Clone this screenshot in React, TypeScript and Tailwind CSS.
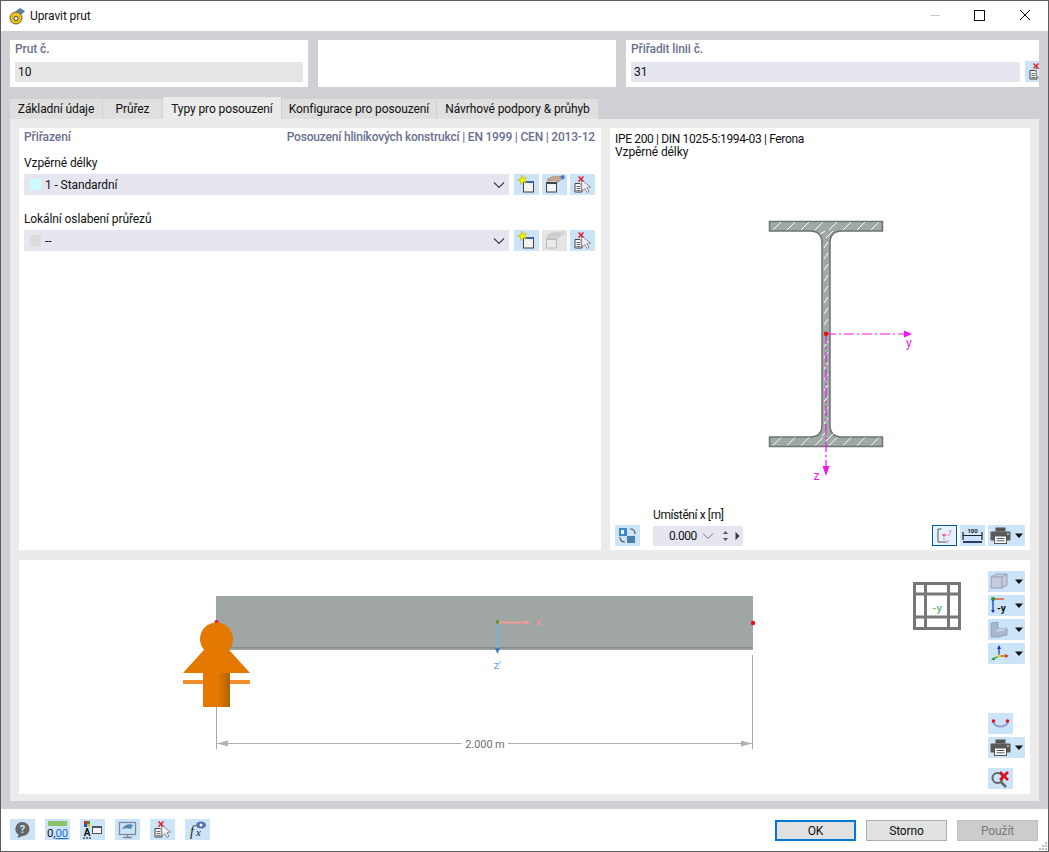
import type { ReactNode } from 'react';

const font = { fontFamily: 'Roboto, "Noto Sans", sans-serif' };

function Caret() {
  return (
    <svg width="12" height="21" viewBox="0 0 12 21" className="shrink-0">
      <path d="M2 8.500h8l-4 4.500z" fill="#111" />
    </svg>
  );
}

function IconBtn({ children, caret, disabled }: { children: ReactNode; caret?: boolean; disabled?: boolean }) {
  return (
    <div className={`flex h-[21px] shrink-0 ${caret ? 'w-[37px]' : 'w-[25px]'} ${disabled ? 'bg-[#e5e5e5]' : 'bg-[#cce4f7]'}`}>
      <svg width="25" height="21" viewBox="0 0 25 21" className="shrink-0">{children}</svg>
      {caret && <Caret />}
    </div>
  );
}

function NewIco() {
  return (
    <>
      <rect x="9.500" y="7.500" width="10" height="10.500" fill="#f3f3f3" stroke="#444" />
      <rect x="9" y="7" width="11" height="2" fill="#3b5ea8" />
      <path d="M8 1l1.400 3 3.300-.6-2 2.600 1.700 3-3.400-1-2.300 2.500-.2-3.300L3.300 6l3.300-1z" fill="#f5f000" stroke="#a8a400" strokeWidth=".5" />
    </>
  );
}

function EditIco({ off }: { off?: boolean }) {
  return (
    <g opacity={off ? 0.4 : 1}>
      <rect x="4.500" y="8.500" width="10" height="9.500" fill="#f3f3f3" stroke={off ? '#777' : '#444'} />
      <rect x="4" y="8" width="11" height="2" fill={off ? '#888' : '#444'} />
      <path d="M5 6c1-2 4-3 7-3.500 2-.5 4-.5 6 0l1 3-3 2.500-3-1.500-4 .5-3 .5z" fill={off ? '#aaa' : '#c9a58c'} stroke={off ? '#999' : '#9a7a66'} strokeWidth=".5" />
      <path d="M18 2l4-1 1 3-3 2z" fill={off ? '#bbb' : '#4a7fc0'} />
    </g>
  );
}

function PickIco() {
  return (
    <>
      <path d="M5 9.500h5l2 2v6.500H5z" fill="#f5f5f5" stroke="#444" />
      <path d="M6.500 12.500h4M6.500 14.500h4M6.500 16.500h4" stroke="#444" strokeWidth=".8" />
      <path d="M11.500 6l9 7-3.500.5 2 4-2 1-2-4-3 2.500z" fill="#f5f5f5" stroke="#777" strokeWidth=".8" />
      <path d="M8.500 2.500l5 5M13.500 2.500l-5 5" stroke="#e0202a" strokeWidth="1.500" />
    </>
  );
}

function PrintIco() {
  return (
    <>
      <rect x="7.500" y="2.500" width="10" height="4" fill="#555" />
      <rect x="2.500" y="6.500" width="20" height="9" rx="1" fill="#5a5a5a" />
      <rect x="6.500" y="11" width="12" height="7.500" fill="#fff" stroke="#555" />
      <path d="M8.500 13.500h8M8.500 15.800h8" stroke="#555" />
      <rect x="19" y="8.500" width="2" height="1" fill="#fff" />
    </>
  );
}

function Select({ swatch, label }: { swatch: string; label: string }) {
  return (
    <div className="flex h-[21px] w-[485px] items-center bg-[#e6e6f0] pl-[6px] pr-[3px]">
      <div className={`h-[11px] w-[11px] ${swatch}`} />
      <span className="ml-[4px] flex-1 pt-px">{label}</span>
      <svg width="14" height="10" viewBox="0 0 14 10">
        <path d="M2 2.500l5 5 5-5" fill="none" stroke="#444" strokeWidth="1.200" />
      </svg>
    </div>
  );
}

function Tab({ label, w, active }: { label: string; w: string; active?: boolean }) {
  return (
    <div className={`flex items-center justify-center ${w} ${active ? 'h-[22px] bg-[#ebebeb] pt-[2px]' : 'h-[20px] bg-[#dfdfdf] pt-px'}`}>
      {label}
    </div>
  );
}

function SectionDrawing() {
  const flangeX = [776, 790, 804, 818, 832, 846, 860, 874];
  const webY = [245, 256, 267, 278, 289, 300, 311, 322, 344, 355, 366, 377, 388, 399, 410, 421];
  return (
    <svg width="420" height="345" viewBox="610 160 420 345" className="block shrink-0">
      <path
        d="M769.500 221.500H882.500V231H842Q830 231 830 243V425Q830 437 842 437H882.500V446.500H769.500V437H810Q822 437 822 425V243Q822 231 810 231H769.500Z"
        fill="#9fa9a6"
        stroke="#6d7371"
        strokeWidth="1.500"
      />
      <g stroke="#fff" strokeWidth="1">
        {flangeX.map((x) => (
          <g key={x}>
            <path d={`M${x - 3} 230l8-8`} />
            <path d={`M${x - 3} 445.500l8-8`} />
          </g>
        ))}
        <path d="M826 238l7-7M820 234l5-3M822 436l5-5M826 441l8-8" />
        {webY.map((y) => (
          <path key={y} d={`M824 ${y + 3}l4-6`} />
        ))}
      </g>
      <g stroke="#f014f0" strokeWidth="1.200" strokeDasharray="10 3 2 3" fill="none">
        <path d="M826 334H904" />
        <path d="M826 334V468" />
      </g>
      <path d="M904 330.500l8 3.500-8 3.500z" fill="#f014f0" />
      <path d="M822.500 466l3.500 10 3.500-10z" fill="#f014f0" />
      <circle cx="826" cy="333.700" r="2.300" fill="#f01010" />
      <text x="906" y="347" fontSize="12" fill="#f014f0">y</text>
      <text x="813.500" y="480" fontSize="12" fill="#f014f0">z</text>
    </svg>
  );
}

function BeamDrawing() {
  return (
    <svg width="969" height="234" viewBox="19 560 969 234" className="block shrink-0">
      <defs>
        <linearGradient id="post" x1="0" x2="1" y1="0" y2="0">
          <stop offset="0" stopColor="#e57800" />
          <stop offset=".55" stopColor="#e57800" />
          <stop offset="1" stopColor="#b06000" />
        </linearGradient>
      </defs>
      <rect x="216" y="596" width="537" height="54" fill="#9fa6a3" />
      <rect x="216" y="647" width="537" height="1.500" fill="#858c8a" />
      <circle cx="216.500" cy="622" r="2" fill="#f01030" />
      <circle cx="753" cy="623" r="2.200" fill="#f01010" />

      <path d="M497.500 622.500H527" stroke="#f29b9b" strokeWidth="2" />
      <path d="M525 620l5.500 2.500-5.500 2.500z" fill="#f29b9b" />
      <path d="M497.500 622V650" stroke="#6db5ea" strokeWidth="2" />
      <path d="M495 648h5l-2.500 6z" fill="#3a78b8" />
      <rect x="496" y="620.500" width="3" height="3" fill="#5a9a20" />
      <text x="535.500" y="626" fontSize="11.500" fill="#f29b9b">x'</text>
      <text x="493.500" y="668.500" fontSize="11.500" fill="#5aa9f0">z'</text>

      <path d="M216.500 707V749M752.500 655V749" stroke="#a9a9a9" />
      <path d="M217 743.500H462M508 743.500H752" stroke="#b0b0b0" />
      <path d="M217 743.500l11-3v6zM752 743.500l-11-3v6z" fill="#b0b0b0" />
      <text x="485" y="748" fontSize="11" textAnchor="middle" fill="#6f6f6f">2.000 m</text>

      <circle cx="216.500" cy="639" r="16.500" fill="#e57800" />
      <path d="M216.500 636L250 673H183z" fill="#e57800" />
      <rect x="183" y="680" width="67" height="4" fill="#ef8e2a" />
      <rect x="203" y="673" width="27" height="34" fill="url(#post)" />

      <g stroke="#777" strokeWidth="3" fill="none">
        <rect x="914.500" y="583.500" width="45" height="45" />
        <path d="M925.500 583V629M948.500 583V629M914 594H960M914 617H960" />
      </g>
      <text x="937" y="612" fontSize="11" fontWeight="700" textAnchor="middle" fill="#7fbf8f">-y</text>
    </svg>
  );
}

export default function App() {
  return (
    <div style={font} className="flex h-[852px] w-[1049px] flex-col overflow-hidden border border-[#5c5c5c] bg-white text-[12px] leading-[13px] tracking-[-0.1px] text-[#111]">
      {/* title bar */}
      <div className="flex h-[30px] shrink-0 items-center pl-[8px]">
        <svg width="18" height="18" viewBox="0 0 18 18">
          <path d="M3 7l8-6 5 3-6 6z" fill="#5a7fa8" />
          <circle cx="7" cy="11" r="6" fill="#e8c020" stroke="#7a6a20" />
          <circle cx="7" cy="11.500" r="2" fill="#fff" stroke="#444" />
        </svg>
        <span className="ml-[3px] flex-1">Upravit prut</span>
        <svg width="118" height="30" viewBox="0 0 118 30">
          <path d="M0 14.500H10" stroke="#c8c8c8" />
          <rect x="44.500" y="9.500" width="10" height="10" fill="none" stroke="#111" />
          <path d="M90 9l10 10M100 9l-10 10" stroke="#111" />
        </svg>
      </div>

      {/* body */}
      <div className="flex h-[778px] shrink-0 flex-col bg-[#d0cfd4] pl-[9px] pt-[9px]">
        <div className="flex h-[47px] gap-[10px]">
          <div className="w-[298px] bg-white px-[5px] pt-[3px]">
            <div className="h-[19px] font-medium leading-[13px] text-[#6a6f8e]">Prut č.</div>
            <div className="flex h-[20px] items-center bg-[#e5e5e5] pl-[3px] pt-px">10</div>
          </div>
          <div className="w-[298px] bg-white" />
          <div className="w-[413px] overflow-hidden bg-white pl-[5px] pt-[3px]">
            <div className="h-[19px] font-medium text-[#6a6f8e]">Přiřadit linii č.</div>
            <div className="flex gap-[5px]">
              <div className="flex h-[20px] w-[389px] shrink-0 items-center bg-[#e6e6f0] pl-[3px] pt-px">31</div>
              <div className="-mt-px"><IconBtn><PickIco /></IconBtn></div>
            </div>
          </div>
        </div>

        <div className="mt-[10px] flex h-[22px] items-end gap-px">
          <Tab label="Základní údaje" w="w-[92px]" />
          <Tab label="Průřez" w="w-[59px]" />
          <Tab label="Typy pro posouzení" w="w-[118px]" active />
          <Tab label="Konfigurace pro posouzení" w="w-[154px]" />
          <Tab label="Návrhové podpory & průhyb" w="w-[161px]" />
        </div>

        <div className="flex h-[682px] w-[1029px] flex-col gap-[10px] bg-[#ebebeb] px-[9px] pb-[7px] pt-[9px]">
          <div className="flex h-[422px] gap-[9px]">
            {/* left panel */}
            <div className="w-[582px] bg-white pl-[5px] pr-[6px] pt-[3px]">
              <div className="flex h-[13px] justify-between font-medium text-[#6a6f8e]">
                <span>Přiřazení</span>
                <span className="tracking-[-0.19px]">Posouzení hliníkových konstrukcí | EN 1999 | CEN | 2013-12</span>
              </div>
              <div className="mt-[13px]">Vzpěrné délky</div>
              <div className="mt-[4px] flex gap-[3px]">
                <div className="mr-[2px]"><Select swatch="bg-[#ccfcff]" label="1 - Standardní" /></div>
                <IconBtn><NewIco /></IconBtn>
                <IconBtn><EditIco /></IconBtn>
                <IconBtn><PickIco /></IconBtn>
              </div>
              <div className="mt-[18px]">Lokální oslabení průřezů</div>
              <div className="mt-[4px] flex gap-[3px]">
                <div className="mr-[2px]"><Select swatch="bg-[#dcdcdc]" label="--" /></div>
                <IconBtn><NewIco /></IconBtn>
                <IconBtn disabled><EditIco off /></IconBtn>
                <IconBtn><PickIco /></IconBtn>
              </div>
            </div>

            {/* right panel */}
            <div className="flex w-[420px] flex-col bg-white pb-[4px] pt-[5px]">
              <div className="mb-px pl-[5px]">
                <div className="tracking-[-0.35px]">IPE 200 | DIN 1025-5:1994-03 | Ferona</div>
                <div>Vzpěrné délky</div>
              </div>
              <SectionDrawing />
              <div className="mt-auto flex items-end pl-[5px] pr-[5px]">
                <IconBtn>
                  <rect x="4" y="3" width="8" height="8" fill="#3f86d0" />
                  <rect x="6" y="5" width="3" height="4" fill="#dff" />
                  <rect x="12" y="11" width="8" height="7" fill="#4a7fae" />
                  <path d="M15 4c3 0 5 2 5 5M10 17c-3 0-5-2-5-5" fill="none" stroke="#555" strokeWidth="1.200" />
                </IconBtn>
                <div className="ml-[13px] flex flex-col gap-[4px]">
                  <span className="h-[13px] tracking-[-0.4px]">Umístění x [m]</span>
                  <div className="flex h-[20px] w-[90px] items-center bg-[#e6e6f0] pl-[16px]">
                    <span className="w-[29px] tracking-[-0.5px]">0.000</span>
                    <svg width="45" height="20" viewBox="0 0 45 20">
                      <path d="M5 7.500l5 5 5-5" fill="none" stroke="#777" />
                      <path d="M25 8l2.500-3 2.500 3zM25 12l2.500 3 2.500-3z" fill="#555" />
                      <path d="M37.500 6v8l4-4z" fill="#333" />
                    </svg>
                  </div>
                </div>
                <div className="flex-1" />
                <div className="flex gap-[3px]">
                  <div className="h-[21px] w-[25px] border border-[#005a9e] bg-[#e5f1fb]">
                    <svg width="23" height="19" viewBox="0 0 23 19">
                      <path d="M8.500 3H5v13h8" fill="none" stroke="#555" />
                      <path d="M9 9h8M11 9v6" stroke="#e060a8" strokeDasharray="2 1" />
                      <circle cx="11" cy="9" r="1.200" fill="#e060a8" />
                      <text x="16" y="7" fontSize="6" fill="#e060a8">y</text>
                      <text x="13" y="17" fontSize="6" fill="#e060a8">z</text>
                    </svg>
                  </div>
                  <IconBtn>
                    <path d="M3 7v8M22 7v8M3 10.500h19" stroke="#222" strokeWidth="1.200" fill="none" />
                    <rect x="3" y="16" width="19" height="2" fill="#2a3a6a" />
                    <text x="12.500" y="8" fontSize="6" fontWeight="700" textAnchor="middle" fill="#222">100</text>
                  </IconBtn>
                  <IconBtn caret><PrintIco /></IconBtn>
                </div>
              </div>
            </div>
          </div>

          {/* lower panel */}
          <div className="flex h-[234px] w-[1011px] bg-white">
            <BeamDrawing />
            <div className="flex flex-col gap-[3px] pt-[11px]">
              <IconBtn caret>
                <path d="M3 6l5-3h11v11l-5 3H3z" fill="#c3cbdc" stroke="#8a93a8" strokeWidth=".8" />
                <path d="M3 6h11v11M14 6l5-3" fill="none" stroke="#8a93a8" strokeWidth=".8" />
              </IconBtn>
              <IconBtn caret>
                <circle cx="5" cy="4" r="2" fill="#1a9a3a" />
                <path d="M6 4h10" stroke="#d04010" strokeWidth="1.200" />
                <path d="M5 5v11" stroke="#1030c0" strokeWidth="1.200" />
                <path d="M3 15l2 3 2-3z" fill="#1030c0" />
                <text x="9" y="17" fontSize="10" fontWeight="700" fill="#111">-y</text>
              </IconBtn>
              <IconBtn caret>
                <path d="M3 4l7-1v7l9-1v7l-9 2H3z" fill="#a8b8d0" stroke="#8a9ab0" strokeWidth=".8" />
                <path d="M10 10l9-1-4 3-8 1z" fill="#c8d4e4" />
              </IconBtn>
              <IconBtn caret>
                <path d="M11 13V5" stroke="#1030c0" strokeWidth="1.200" />
                <path d="M9 6l2-4 2 4z" fill="#1030c0" />
                <path d="M11 13h7" stroke="#d04010" strokeWidth="1.200" />
                <path d="M17 11l4 2-4 2z" fill="#d04010" />
                <path d="M11 13l-6 3" stroke="#1a9a3a" strokeWidth="1.200" />
                <path d="M3 17l3-3 1 3z" fill="#1a9a3a" />
                <circle cx="11" cy="13" r="1.800" fill="#f0d020" />
              </IconBtn>
              <div className="h-[43px]" />
              <IconBtn>
                <path d="M5 9c3 6 12 6 15 0" fill="none" stroke="#8aa0c8" strokeWidth="2" />
                <circle cx="5.500" cy="8" r="1.800" fill="#e01020" />
                <circle cx="19.500" cy="8" r="1.800" fill="#e01020" />
              </IconBtn>
              <IconBtn caret><PrintIco /></IconBtn>
              <div className="mt-[7px]">
                <IconBtn>
                  <circle cx="9.500" cy="10" r="5" fill="none" stroke="#666" strokeWidth="2" />
                  <path d="M13 14l5 5" stroke="#666" strokeWidth="2.500" />
                  <path d="M12 4l8 8M20 4l-8 8" stroke="#e01020" strokeWidth="2.500" />
                </IconBtn>
              </div>
            </div>
          </div>
        </div>
      </div>

      {/* footer */}
      <div className="relative flex h-[42px] shrink-0 items-start pl-[9px] pt-[10px]">
        <div className="flex gap-[10px]">
          <IconBtn>
            <path d="M12.500 3a7 7 0 0 1 0 14l-5 2 1-3.200a7 7 0 0 1 4-12.800z" fill="#666" />
            <text x="12.500" y="14" fontSize="11" fontWeight="700" textAnchor="middle" fill="#cce4f7">?</text>
          </IconBtn>
          <IconBtn>
            <rect x="3" y="2" width="19" height="5" fill="#8fc06a" />
            <text x="2" y="18" fontSize="11.500" fill="#111">0,</text>
            <text x="10.500" y="18" fontSize="11.500" fill="#2a70d0" textDecoration="underline">00</text>
          </IconBtn>
          <IconBtn>
            <rect x="4" y="2" width="3" height="3" fill="#e02020" />
            <rect x="7" y="2" width="3" height="3" fill="#30a030" />
            <rect x="4" y="5" width="3" height="3" fill="#2050d0" />
            <rect x="7" y="5" width="3" height="3" fill="#e0c020" />
            <text x="7" y="17" fontSize="10" fontWeight="700" textAnchor="middle" fill="#111">A</text>
            <rect x="12.500" y="7.500" width="9" height="7" fill="#f5f5f5" stroke="#555" />
            <rect x="12" y="7" width="10" height="2" fill="#555" />
            <path d="M3 19h8" stroke="#111" strokeDasharray="2 1" />
          </IconBtn>
          <IconBtn>
            <rect x="4.500" y="3.500" width="16" height="12" fill="none" stroke="#7a8a9a" strokeWidth="1.300" />
            <path d="M7 10c2-4 7-6 11-4l-2 4c-3-1-6-1-9 0z" fill="#5a88b0" />
            <path d="M12.500 16v2M8 18.500h9" stroke="#7a8a9a" strokeWidth="1.300" />
          </IconBtn>
          <IconBtn><PickIco /></IconBtn>
          <IconBtn>
            <text x="5" y="17" fontSize="14" fontStyle="italic" fontFamily='"Liberation Serif", serif' fill="#222">f</text>
            <text x="11" y="17" fontSize="11" fontStyle="italic" fontFamily='"Liberation Serif", serif' fill="#222">x</text>
            <ellipse cx="16" cy="6" rx="5" ry="3.500" fill="#5a70b0" />
            <circle cx="16" cy="6" r="1.500" fill="#fff" />
          </IconBtn>
        </div>
        <div className="flex-1" />
        <div className="flex gap-[10px] pr-[10px] pt-px">
          <div className="flex h-[21px] w-[81px] items-center justify-center border-2 border-[#0078d7] bg-[#e1e1e1] pt-px">OK</div>
          <div className="flex h-[21px] w-[81px] items-center justify-center border border-[#adadad] bg-[#e1e1e1] pt-px">Storno</div>
          <div className="flex h-[21px] w-[81px] items-center justify-center border border-[#bfbfbf] bg-[#cccccc] pt-px text-[#787878]">Použít</div>
        </div>
        <svg width="10" height="10" viewBox="0 0 10 10" className="absolute bottom-0 right-0">
          <path d="M7 1h2v2H7zM4 4h2v2H4zM7 4h2v2H7zM1 7h2v2H1zM4 7h2v2H4zM7 7h2v2H7z" fill="#bdbdbd" />
        </svg>
      </div>
    </div>
  );
}
